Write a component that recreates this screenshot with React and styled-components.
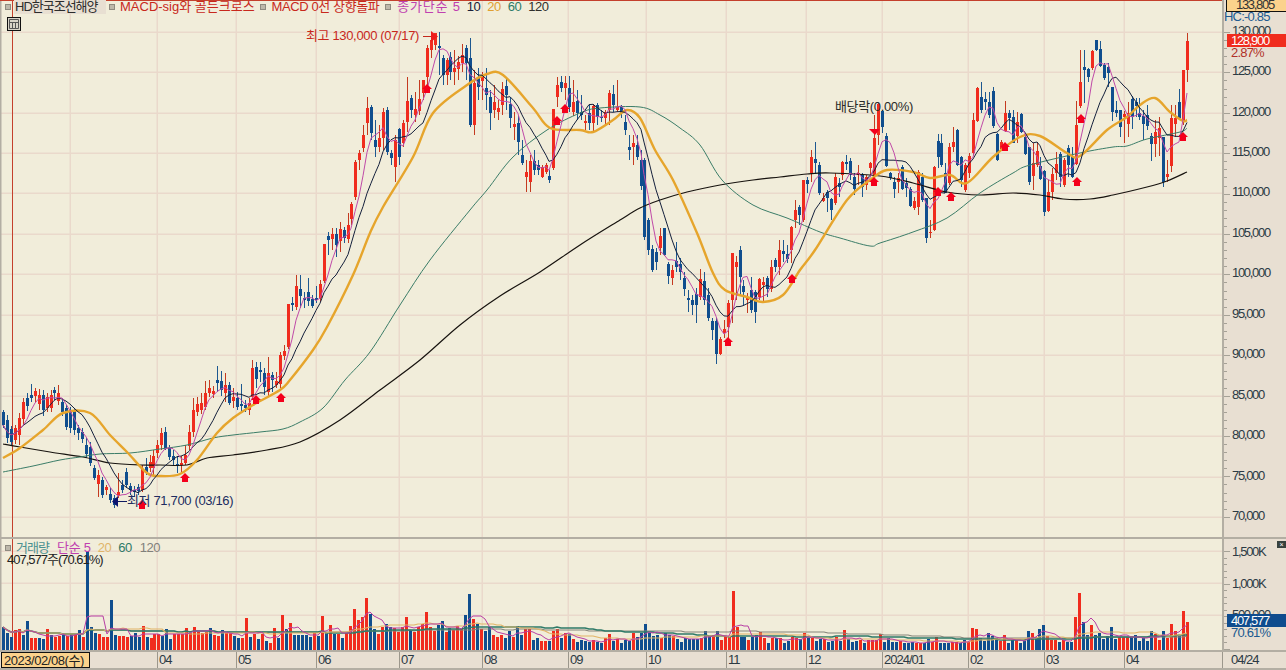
import React from 'react';
import styled, { createGlobalStyle } from 'styled-components';

const CANDLES = `b 412 425 410 428;b 420 438 415 443;b 429 442 426 445;r 428 440 425 444;r 418 435 413 445;r 402 419 398 425;b 398 406 393 411;b 395 398 384 402;r 391 396 388 402;r 395 404 389 410;b 395 410 390 416;r 397 408 393 412;r 395 408 390 412;b 390 393 387 400;r 393 401 385 405;b 402 412 398 416;b 408 427 405 430;b 410 428 407 433;b 410 430 408 435;b 428 433 425 440;b 432 439 428 443;b 445 454 438 458;b 447 463 442 466;b 468 478 465 480;r 475 484 470 497;b 480 495 477 498;r 487 490 485 495;b 494 500 488 503;b 498 505 495 508;r 492 495 473 498;b 485 490 480 493;b 472 485 468 488;b 486 490 483 495;b 490 492 486 497;b 487 491 484 495;r 469 490 465 492;b 467 472 458 475;r 462 468 455 472;r 456 468 450 475;r 445 453 440 458;r 433 445 428 450;b 432 448 427 450;b 448 457 445 460;b 456 460 450 465;b 464 465 456 473;r 463 465 456 472;r 455 463 445 465;r 432 446 425 450;r 410 432 398 437;r 404 412 397 416;r 403 410 393 414;r 393 407 381 410;r 388 393 380 397;r 391 394 386 398;b 380 383 366 392;b 381 390 371 396;r 385 393 373 402;b 385 403 382 405;r 397 401 388 408;b 398 407 392 410;b 404 406 384 412;b 405 408 400 412;r 403 410 398 415;r 368 397 360 400;b 367 379 362 388;b 370 372 362 382;b 373 387 368 395;r 373 392 357 396;b 375 380 372 392;r 381 385 372 388;r 355 384 352 388;r 351 356 345 360;r 304 347 304 349;b 303 305 297 311;r 286 307 275 310;b 289 296 275 308;b 298 300 292 308;b 292 301 278 306;b 299 306 295 308;b 298 300 286 303;r 284 298 280 302;r 244 281 244 283;b 236 240 232 255;r 234 239 228 250;b 234 245 228 257;r 229 241 222 252;b 230 238 227 243;r 225 239 213 243;r 204 219 202 225;r 162 197 160 200;r 153 160 150 170;r 135 148 125 152;r 108 123 97 135;b 107 133 105 140;b 140 147 120 157;r 138 147 125 152;r 112 138 108 150;b 110 152 107 155;b 153 158 150 165;r 140 167 135 182;b 129 157 128 165;r 123 143 120 147;r 101 122 77 132;b 98 110 95 118;r 109 115 92 122;r 99 111 80 115;r 80 93 80 100;r 48 77 45 90;r 40 50 38 58;r 33 45 33 50;b 46 48 32 75;b 58 75 55 85;r 60 75 58 85;b 57 72 52 80;r 68 72 50 85;r 62 69 56 80;r 55 63 44 72;b 48 63 45 80;b 58 125 38 127;r 83 125 70 135;b 77 87 68 100;r 77 81 72 100;b 88 95 68 110;b 97 113 90 130;r 102 110 85 118;r 108 112 100 120;r 89 105 82 115;b 86 95 78 110;b 104 118 97 128;r 124 127 112 140;b 123 142 115 155;b 155 163 140 165;r 172 177 160 192;r 161 182 155 192;b 161 170 150 175;b 165 170 160 175;r 167 177 165 178;r 165 172 163 174;b 176 180 170 183;r 109 168 109 170;r 85 97 77 107;b 82 88 76 92;r 83 88 76 100;b 88 107 76 112;r 102 112 80 116;b 101 113 90 120;b 112 115 95 120;r 121 123 115 130;b 113 123 105 130;r 106 123 104 132;b 105 117 103 125;b 117 118 110 122;r 112 118 110 125;r 93 110 90 125;b 94 105 85 112;r 107 110 80 112;b 107 113 105 118;b 122 130 115 135;b 147 150 135 160;r 143 147 135 165;b 145 157 135 160;b 160 186 150 190;b 160 237 158 240;b 220 250 218 255;b 249 270 245 272;b 252 262 248 270;r 236 248 228 255;b 228 255 228 256;b 264 276 262 284;r 270 278 265 285;b 261 267 242 272;b 264 272 258 280;b 278 289 272 296;b 298 300 290 312;b 300 305 295 315;b 294 305 288 323;r 279 297 269 300;b 281 300 272 305;b 295 318 288 321;b 321 330 318 340;b 321 354 318 364;r 339 354 337 355;r 329 333 320 338;r 303 327 300 340;r 253 300 253 323;r 262 267 256 300;b 250 277 246 295;b 286 292 280 305;r 298 300 293 313;b 290 310 277 313;b 292 312 290 323;r 279 297 278 300;r 282 285 277 303;b 278 289 276 297;r 267 289 260 292;b 260 267 258 272;r 250 267 240 275;b 251 254 240 262;b 254 259 245 263;r 227 250 226 263;r 210 220 200 228;b 207 215 205 225;r 180 220 180 222;b 180 184 177 193;r 157 173 150 182;b 159 163 142 173;b 165 193 162 195;r 198 201 193 202;b 192 198 190 212;b 199 210 198 220;r 177 203 173 205;b 183 187 178 197;r 162 175 161 180;b 162 164 155 170;b 161 175 158 180;b 177 189 173 195;r 173 175 165 185;b 175 187 173 197;r 177 185 175 190;r 163 168 162 177;r 138 177 115 180;r 104 135 103 145;b 111 127 110 133;b 136 166 133 167;b 173 178 172 180;b 182 189 177 198;r 178 182 173 193;b 167 189 165 190;b 183 188 178 197;b 189 206 187 207;r 201 208 197 210;r 172 207 170 215;b 177 200 173 202;b 198 238 198 243;r 232 233 220 238;r 167 230 166 231;b 141 157 134 168;b 143 165 134 167;b 173 193 163 193;r 147 183 143 185;r 142 147 127 152;b 130 165 129 166;b 157 180 156 187;r 165 190 163 192;r 156 173 153 178;r 120 153 113 155;r 88 121 87 122;b 97 110 82 113;b 99 102 92 110;b 102 115 92 118;b 91 126 87 128;b 134 160 133 161;r 142 149 140 151;r 113 131 101 132;b 113 118 110 130;b 117 143 110 143;r 122 136 112 143;b 114 132 113 133;b 137 154 133 155;b 147 182 147 185;r 163 176 143 190;r 151 165 142 167;b 166 179 157 180;b 171 212 170 216;r 192 211 180 212;r 174 192 168 200;r 164 173 152 180;b 154 177 152 187;r 160 185 158 187;b 148 165 145 177;b 157 177 147 178;r 125 164 101 165;r 82 106 50 108;b 67 70 50 103;b 69 77 68 82;r 51 68 50 70;b 40 50 40 51;b 49 66 41 67;b 65 78 63 80;b 67 73 63 87;b 87 112 87 121;b 110 113 101 117;b 110 127 110 137;r 114 117 111 143;r 113 124 102 137;b 99 117 96 129;b 102 106 98 117;b 113 117 98 120;b 116 124 110 140;b 115 126 105 130;b 136 144 133 161;r 132 144 120 157;r 128 138 117 156;b 137 182 137 187;r 174 177 160 182;r 118 166 105 172;r 118 124 105 137;b 102 118 89 120;r 70 121 70 125;r 41 70 33 82`;

const VOLUMES = `b23 b17 b13 r20 r21 b15 b29 r12 r12 b12 b11 r21 b15 r13 r14 b15 r14 b16 r16 b20 r13 b99 b23 b17 r16 r13 r13 b50 b15 r14 r14 r13 b14 b17 b13 r24 b13 r12 r16 r16 b14 b21 b11 r16 r16 r16 r22 r17 r23 r18 r17 r18 b22 r15 r14 b20 r17 r17 b14 b12 r12 r32 b13 r16 b11 r16 b9 r7 r22 b12 r35 b21 r27 b15 b15 b15 b15 b13 r17 b14 r34 b17 r25 b16 r16 b12 r17 r24 r41 r30 r33 r52 b36 b21 r16 r23 b26 b23 r22 r18 r23 r33 b20 r18 r23 r26 r38 r23 r19 b25 b29 r18 b22 r20 r24 r22 b35 b56 r31 b26 r21 b19 b23 r15 r13 r15 b12 b19 r13 b24 b15 r21 r21 b10 b12 r9 r9 b9 r19 r21 b12 r17 b16 r11 b8 b10 b9 b8 r10 b8 b7 r12 r16 b9 r11 b7 b10 b9 r17 b13 b17 b26 b17 b14 b15 r12 b17 b15 r14 b11 b8 b12 b11 b11 b11 r12 b19 b14 r15 b19 r10 r14 r14 r59 r23 b13 b13 r10 b13 b15 r18 r12 b7 r12 b12 r12 b7 b9 r13 r12 b11 r17 b12 r12 b9 b11 r11 b8 b9 r13 b9 r20 b11 b8 b9 r10 b7 r10 r10 r10 r16 b8 b12 b8 b8 r9 b7 b7 b8 r7 r7 b7 b11 r8 r13 b7 b7 b7 r8 r8 b7 b10 r8 r22 r21 b12 b9 b17 b14 b12 r9 r15 b7 b10 r10 b7 b9 b19 r17 b13 b21 b25 r14 r10 r10 b8 r10 b8 b8 r33 r57 b28 b15 r25 b15 b17 b11 b14 b23 b11 r13 r13 r13 b13 b15 b9 b12 b9 b19 r16 r10 b19 r12 r26 r19 b14 r39 r28`;

const parsedCandles = CANDLES.split(';').map((s) => {
  const p = s.trim().split(' ');
  const [t, b, h, l] = p.slice(1).map(Number);
  return { up: p[0] === 'r', t, b, h: Math.min(h, t), l: Math.max(l, b) };
});
const stepC = (1187 - 3) / (parsedCandles.length - 1);
const candles = parsedCandles.map((c, i) => ({ ...c, x: Math.round(3 + i * stepC) }));

const parsedVol = VOLUMES.split(' ').map((s) => ({ up: s[0] === 'r', h: Number(s.slice(1)) }));
const stepV = (1187 - 3) / (parsedVol.length - 1);
const volumes = parsedVol.map((v, i) => ({ ...v, x: Math.round(3 + i * stepV) }));

const movingAvg = (vals, n) =>
  vals.map((_, i) => {
    const s = Math.max(0, i - n + 1);
    const w = vals.slice(s, i + 1);
    return w.reduce((a, b) => a + b, 0) / w.length;
  });

const closes = candles.map((c) => (c.up ? c.t : c.b));
const toPoints = (ys, xs) => ys.map((y, i) => `${xs[i]},${y.toFixed(1)}`).join(' ');
const candleXs = candles.map((c) => c.x);
const ma5 = toPoints(movingAvg(closes, 5), candleXs);
const ma10 = toPoints(movingAvg(closes, 10), candleXs);

// A traced average line, drawn as a Catmull-Rom curve through its points.
const smooth = (pts) => {
  const p = pts.split(' ').map((s) => s.split(',').map(Number));
  let d = `M${p[0][0]} ${p[0][1]}`;
  for (let i = 0; i < p.length - 1; i++) {
    const a = p[Math.max(0, i - 1)];
    const b = p[i];
    const c = p[i + 1];
    const e = p[Math.min(p.length - 1, i + 2)];
    const c1 = [b[0] + (c[0] - a[0]) / 6, b[1] + (c[1] - a[1]) / 6];
    const c2 = [c[0] - (e[0] - b[0]) / 6, c[1] - (e[1] - b[1]) / 6];
    d += `C${c1[0].toFixed(1)} ${c1[1].toFixed(1)} ${c2[0].toFixed(1)} ${c2[1].toFixed(1)} ${c[0]} ${c[1]}`;
  }
  return d;
};

const MA20 = '3,458 20,448 43,430 63,413 90,413 110,435 127,452 147,473 160,476 180,474 197,460 217,433 233,418 253,405 280,390 290,380 313,350 327,327 353,275 370,233 383,207 413,157 433,113 467,85 487,74 503,75 533,108 550,128 580,130 593,132 613,120 627,110 640,118 655,150 673,180 697,233 713,273 725,290 747,297 763,302 783,295 800,270 815,250 847,200 870,180 887,170 913,172 930,178 950,175 967,183 993,157 1020,137 1040,136 1067,153 1080,156 1107,130 1127,117 1140,105 1155,98 1170,112 1183,121 1187,120';
const MA60 = '3,472 33,466 60,460 80,457 100,454 130,453 160,449 187,445 213,438 233,435 260,432 283,429 300,422 323,408 345,380 370,352 400,305 430,260 470,210 487,190 513,157 547,130 580,113 600,108 640,107 660,115 680,128 700,145 722,180 753,205 787,218 820,232 840,238 870,246 880,243 913,232 947,218 980,193 1013,173 1030,165 1080,153 1113,147 1127,146 1147,139 1180,132 1187,128';
const MA120 = '3,444 20,447 50,452 83,457 110,463 140,465 160,465 187,465 207,458 233,455 267,450 300,442 340,420 380,390 420,360 460,325 500,296 540,272 580,245 620,220 640,208 660,200 687,192 720,185 753,180 780,177 807,174 830,173 880,176 913,183 947,192 980,195 1013,193 1040,195 1063,199 1090,199 1113,195 1147,187 1167,181 1187,172';

const PRICE_GRID = [32, 72, 113, 153, 193, 234, 274, 315, 355, 396, 436, 477, 517];
const MONTH_X = [70, 157, 236, 316, 399, 482, 568, 646, 726, 806, 882, 968, 1044, 1124];
const UP_ARROWS = [[142, 500], [185, 473], [256, 395], [281, 393], [427, 84], [557, 116], [565, 104], [728, 337], [792, 274], [874, 177], [938, 187], [951, 192], [1005, 142], [1077, 177], [1081, 114], [1183, 132]];

const PRICE_LABELS = [
  ['130,000', 31], ['125,000', 71], ['120,000', 112], ['115,000', 152], ['110,000', 192], ['105,000', 233],
  ['100,000', 273], ['95,000', 314], ['90,000', 354], ['85,000', 395], ['80,000', 435], ['75,000', 476], ['70,000', 516],
];
const VOLUME_LABELS = [['1,500K', 13], ['1,000K', 45], ['500,000', 76]];
const MONTHS = [['', 89, 157], ['04', 157, 236], ['05', 236, 316], ['06', 316, 399], ['07', 399, 482], ['08', 482, 568], ['09', 568, 646], ['10', 646, 726], ['11', 726, 806], ['12', 806, 882], ['2024/01', 882, 968], ['02', 968, 1044], ['03', 1044, 1124], ['04', 1124, 1222], ['04/24', 1222, 1286]];

const C = { chart: '#f1edda', side: '#e8dfd2', grid: '#ead9cb', rule: '#b3aea3', red: '#f02c1e', wickR: '#c43a20', blue: '#104e8e', wickB: '#1d5890', text: '#2c3a44' };
const FONT = `"Liberation Sans", "Noto Sans CJK KR", sans-serif`;

const Global = createGlobalStyle`
  html, body { margin: 0; padding: 0; background: ${C.chart}; overflow: hidden; }
  * { box-sizing: border-box; }
`;

const Screen = styled.div`
  width: 1286px;
  height: 670px;
  display: grid;
  grid-template-columns: 1222px 64px;
  grid-template-rows: 537px 113px 20px;
  font: 13px/14px ${FONT};
  letter-spacing: -1px;
  color: ${C.text};
  overflow: hidden;
`;
const Pane = styled.div`
  position: relative;
  background: ${C.chart};
  overflow: hidden;
  border-top: ${(p) => (p.$ruled ? `2px solid ${C.rule}` : 'none')};
`;
const Plot = styled.svg`
  display: block;
  width: 100%;
  height: 100%;
`;
const Legend = styled.div`
  position: absolute;
  left: 5px;
  top: ${(p) => p.$top}px;
  display: flex;
  align-items: center;
  white-space: nowrap;
`;
const Bullet = styled.i`
  width: 6px;
  height: 6px;
  margin-right: ${(p) => p.$after}px;
  background: #bdb8aa;
  border: 1px solid #8f8b80;
`;
const Title = styled.span`
  margin-right: 3px;
  padding: 0 1px;
  width: 92px;
  background: ${C.side};
  color: #2c2c2c;
`;
const Signal = styled.span`
  margin-right: ${(p) => p.$after}px;
  color: ${(p) => p.$color};
  letter-spacing: ${(p) => p.$track ?? -0.5}px;
`;
const GridButton = styled.div`
  position: absolute;
  left: 7px;
  top: 17px;
  width: 14px;
  height: 14px;
  border: 1px solid #111;
  background: #d8d4c8;
  display: flex;
`;
const Note = styled.div`
  position: absolute;
  left: ${(p) => p.$x}px;
  top: ${(p) => p.$y}px;
  color: ${(p) => p.$color};
  letter-spacing: ${(p) => p.$track ?? -0.35}px;
  white-space: nowrap;
`;
const Axis = styled.div`
  position: relative;
  background: ${C.side};
  border-left: 2px solid ${C.rule};
  border-top: ${(p) => (p.$ruled ? `2px solid ${C.rule}` : 'none')};
  overflow: hidden;
  letter-spacing: -1.3px;
`;
const Ticks = styled.svg`
  position: absolute;
  left: 0;
  top: 0;
  width: 10px;
  height: 100%;
`;
const AxisLabel = styled.span`
  position: absolute;
  left: 8px;
  color: ${C.text};
  transform: translateY(-7px);
  white-space: nowrap;
`;
const Tag = styled.div`
  position: absolute;
  left: ${(p) => p.$x}px;
  top: ${(p) => p.$y}px;
  width: ${(p) => p.$w}px;
  height: ${(p) => p.$h}px;
  padding-left: ${(p) => p.$pad}px;
  background: ${(p) => p.$bg};
  color: ${(p) => p.$color};
  border: ${(p) => (p.$framed ? '1px solid #111' : 'none')};
  white-space: nowrap;
`;
const Caption = styled.span`
  position: absolute;
  left: ${(p) => p.$x}px;
  top: ${(p) => p.$y}px;
  color: ${(p) => p.$color};
  letter-spacing: -0.8px;
  white-space: nowrap;
`;
const CloseBox = styled.div`
  position: absolute;
  left: 53px;
  top: 2px;
  width: 9px;
  height: 7px;
  background: #38423e;
  color: #fff;
  font-size: 7px;
  line-height: 7px;
  text-align: center;
  letter-spacing: 0;
`;
const TimeAxis = styled.div`
  grid-column: 1 / 3;
  display: flex;
  background: ${C.side};
  border-top: 2px solid ${C.rule};
  border-bottom: 2px solid ${C.rule};
`;
const DateTag = styled.div`
  width: 89px;
  margin-left: 1px;
  padding-left: 2px;
  background: #fbd28c;
  border: 1px solid #111;
  color: #222;
  line-height: 15px;
  letter-spacing: -0.45px;
  white-space: nowrap;
`;
const Month = styled.div`
  border-left: ${(p) => (p.$blank ? 'none' : `1px solid #9c978c`)};
  padding-left: ${(p) => p.$pad}px;
  line-height: 16px;
  white-space: nowrap;
`;

const Line = ({ pts, color, w }) => <polyline points={pts} fill="none" stroke={color} strokeWidth={w} strokeLinejoin="round" />;
const Curve = ({ pts, color, w }) => <path d={smooth(pts)} fill="none" stroke={color} strokeWidth={w} strokeLinejoin="round" />;

function PriceChart() {
  return (
    <Plot viewBox="0 0 1222 537">
      {PRICE_GRID.map((y) => <rect key={y} x="0" y={y - 0.5} width="1222" height="1.5" fill={C.grid} />)}
      {MONTH_X.map((x) => <rect key={x} x={x - 0.5} y="0" width="1.5" height="537" fill={C.grid} />)}
      <rect x="0" y="0" width="1.5" height="537" fill="#b3aea3" />
      <rect x="0" y="0" width="1222" height="1" fill="#c4402c" />
      <rect x="12" y="0" width="1" height="537" fill="#c4402c" />
      <g shapeRendering="crispEdges">
        {candles.map((c, i) => (
          <g key={i}>
            <rect x={c.x} y={c.h} width="1" height={c.l - c.h} fill={c.up ? C.wickR : C.wickB} />
            <rect x={c.x - 1} y={c.t} width="3" height={Math.max(1, c.b - c.t)} fill={c.up ? C.red : C.blue} />
          </g>
        ))}
      </g>
      <Curve pts={MA120} color="#17130f" w={1.2} />
      <Curve pts={MA60} color="#3b7d68" w={1} />
      <Curve pts={MA20} color="#e6a52c" w={2.4} />
      <Line pts={ma10} color="#14203c" w={1} />
      <Line pts={ma5} color="#c04aa8" w={1} />
      {UP_ARROWS.map(([x, y]) => (
        <polygon key={`${x}-${y}`} points={`${x},${y} ${x + 5},${y + 5} ${x + 3},${y + 5} ${x + 3},${y + 9} ${x - 3},${y + 9} ${x - 3},${y + 5} ${x - 5},${y + 5}`} fill="#f4001c" />
      ))}
      <polygon points="869,129 880,129 875,135" fill="#f4001c" />
      <rect x="423" y="36" width="11" height="1" fill="#c4281c" />
      <polygon points="431,31 438,36.5 431,42" fill="#ee1c1c" />
      <rect x="118" y="501" width="9" height="1" fill="#101a60" />
      <polygon points="118,496 118,507 112,501.5" fill="#0c1470" />
    </Plot>
  );
}

function VolumeChart() {
  const h = 111;
  const base = 111;
  const xs = volumes.map((v) => v.x);
  const ys = (n) => movingAvg(volumes.map((v) => v.h), n).map((m) => Math.round(base - m));
  return (
    <Plot viewBox={`0 0 1222 ${h}`}>
      {[12, 44, 76].map((y) => <rect key={y} x="0" y={y - 0.5} width="1222" height="1.5" fill={C.grid} />)}
      {MONTH_X.map((x) => <rect key={x} x={x - 0.5} y="0" width="1.5" height={h} fill={C.grid} />)}
      <rect x="0" y="0" width="1.5" height={h} fill="#b3aea3" />
      <rect x="12" y="0" width="1" height={h} fill="#c4402c" />
      <g shapeRendering="crispEdges">
        {volumes.map((v, i) => <rect key={i} x={v.x - 1} y={base - v.h} width="3" height={v.h} fill={v.up ? C.red : C.blue} />)}
      </g>
      <Line pts={toPoints(ys(120), xs)} color="#85857a" w={1.2} />
      <Line pts={toPoints(ys(60), xs)} color="#2e7a68" w={1.4} />
      <Line pts={toPoints(ys(20), xs)} color="#e2b467" w={1.2} />
      <Line pts={toPoints(ys(5), xs)} color="#b83ea4" w={1} />
    </Plot>
  );
}

function TickMarks({ start, gap, count, every }) {
  return (
    <Ticks>
      {Array.from({ length: count }, (_, i) => (
        <rect key={i} x="0" y={Math.round(start + i * gap)} width={i % every === 0 ? 6 : 3} height="1" fill="#a5a196" />
      ))}
    </Ticks>
  );
}

export default function App() {
  return (
    <Screen>
      <Global />
      <Pane>
        <PriceChart />
        <Legend $top={0}>
          <Bullet $after={3} />
          <Title>HD한국조선해양</Title>
          <Bullet $after={5} />
          <Signal $color="#c8281c" $after={5} $track={0}>MACD-sig와 골든크로스</Signal>
          <Bullet $after={6} />
          <Signal $color="#c8281c" $after={6} $track={-0.4}>MACD 0선 상향돌파</Signal>
          <Bullet $after={6} />
          <Signal $color="#c040b0" $after={6} $track={0.8}>종가단순 5</Signal>
          <Signal $color="#1a2038" $after={7}>10</Signal>
          <Signal $color="#e0a030" $after={7}>20</Signal>
          <Signal $color="#2e7a68" $after={7}>60</Signal>
          <Signal $color="#30302c" $after={0}>120</Signal>
        </Legend>
        <GridButton>
          <svg width="12" height="12" viewBox="0 0 12 12">
            <path d="M1.5 1.5h9v9h-9zM1.5 4.5h9M4.5 4.5v6M7.5 4.5v6" fill="none" stroke="#555" />
          </svg>
        </GridButton>
        <Note $x={306} $y={29} $color="#c8281c">최고 130,000 (07/17)</Note>
        <Note $x={127} $y={494} $color="#202c60">최저 71,700 (03/16)</Note>
        <Note $x={835} $y={100} $color="#2a2a28">배당락(0.00%)</Note>
      </Pane>
      <Axis>
        <TickMarks start={32} gap={8.08} count={61} every={5} />
        {PRICE_LABELS.map(([t, y]) => <AxisLabel key={t} style={{ top: y }}>{t}</AxisLabel>)}
        <Tag $x={2} $y={-3} $w={62} $h={15} $pad={9} $bg="#fbd28c" $color="#333" $framed>133,805</Tag>
        <Caption $x={0} $y={10} $color="#205a90">HC:-0.85</Caption>
        <Tag $x={3} $y={34} $w={59} $h={13} $pad={4} $bg="#f02c1e" $color="#fff">128,900</Tag>
        <Caption $x={7} $y={46} $color="#b03028">2.87%</Caption>
      </Axis>
      <Pane $ruled>
        <VolumeChart />
        <Legend $top={2}>
          <Bullet $after={5} />
          <Signal $color="#4a9090" $after={8} $track={-1}>거래량</Signal>
          <Signal $color="#c040b0" $after={7} $track={-0.2}>단순 5</Signal>
          <Signal $color="#e0b56a" $after={7}>20</Signal>
          <Signal $color="#2e7a68" $after={8}>60</Signal>
          <Signal $color="#80807a" $after={0}>120</Signal>
        </Legend>
        <Note $x={7} $y={14} $color="#222" $track={-1}>407,577주(70.61%)</Note>
      </Pane>
      <Axis $ruled>
        <TickMarks start={12} gap={6.5} count={16} every={5} />
        {VOLUME_LABELS.map(([t, y]) => <AxisLabel key={t} style={{ top: y }}>{t}</AxisLabel>)}
        <CloseBox>×</CloseBox>
        <Tag $x={3} $y={75} $w={60} $h={13} $pad={4} $bg="#0f4c8e" $color="#fff">407,577</Tag>
        <Caption $x={7} $y={87} $color="#205a90">70.61%</Caption>
      </Axis>
      <TimeAxis>
        <DateTag>2023/02/08(수)</DateTag>
        {MONTHS.map(([label, a, b], i) => (
          <Month key={a} $blank={i === 0} $pad={label === '04/24' ? 8 : 1} style={{ width: b - a - (i === 0 ? 1 : 0) }}>{label}</Month>
        ))}
      </TimeAxis>
    </Screen>
  );
}
